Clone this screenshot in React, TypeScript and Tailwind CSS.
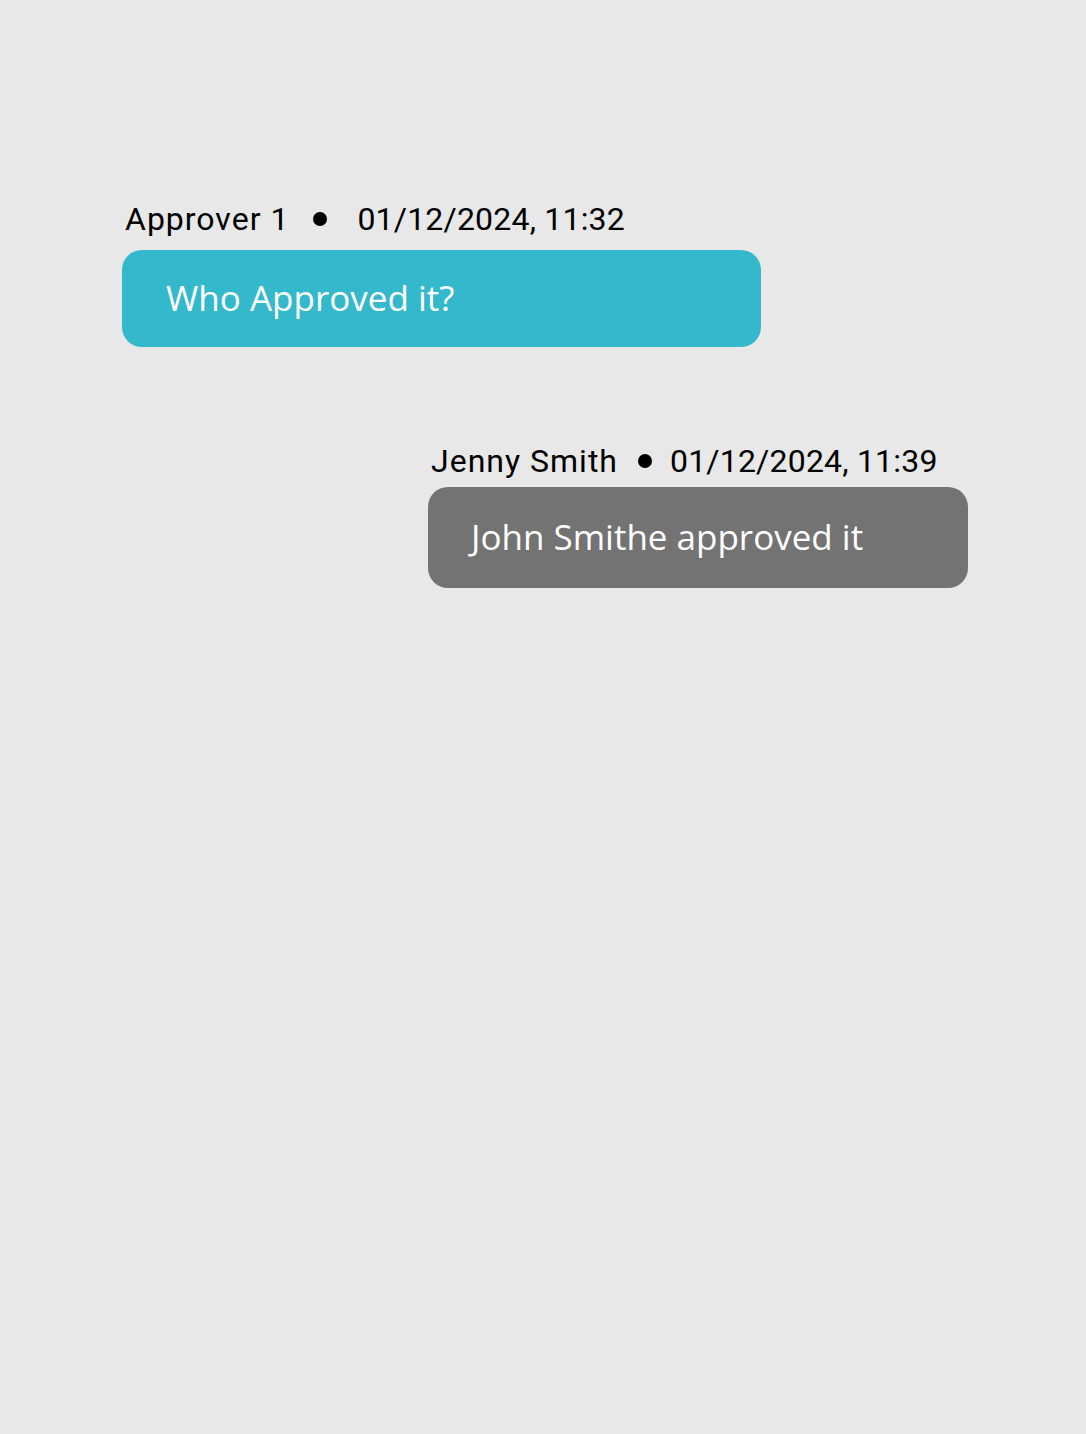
export default function App() {
  return (
    <div className="min-h-[1434px] w-full bg-[#e8e8e8] font-['Roboto',sans-serif]">
      <div className="flex flex-col pt-[199px]">
        <div className="ml-[122px] flex w-[639px] flex-col">
          <div className="ml-[3px] flex items-center text-[32px] leading-[40px] text-black">
            <span className="tracking-[1px]">Approver 1</span>
            <span className="ml-[24px] mr-[30px] h-[14px] w-[14px] rounded-full bg-black" />
            <span className="tracking-[0.2px]">01/12/2024, 11:32</span>
          </div>
          <div className="mt-[11px] flex h-[97px] items-center rounded-[20px] bg-[#33b8cc] pl-[44px] font-['Open_Sans',sans-serif] text-[35px] text-white">
            Who Approved it?
          </div>
        </div>
        <div className="ml-[428px] mt-[94px] flex w-[540px] flex-col">
          <div className="ml-[3px] flex items-center text-[32px] leading-[40px] text-black">
            <span className="tracking-[1px]">Jenny Smith</span>
            <span className="ml-[20px] mr-[18px] h-[14px] w-[14px] rounded-full bg-black" />
            <span className="tracking-[0.2px]">01/12/2024, 11:39</span>
          </div>
          <div className="mt-[6px] flex h-[101px] items-center rounded-[20px] bg-[#737373] pl-[43px] font-['Open_Sans',sans-serif] text-[35px] text-white">
            John Smithe approved it
          </div>
        </div>
      </div>
    </div>
  );
}
